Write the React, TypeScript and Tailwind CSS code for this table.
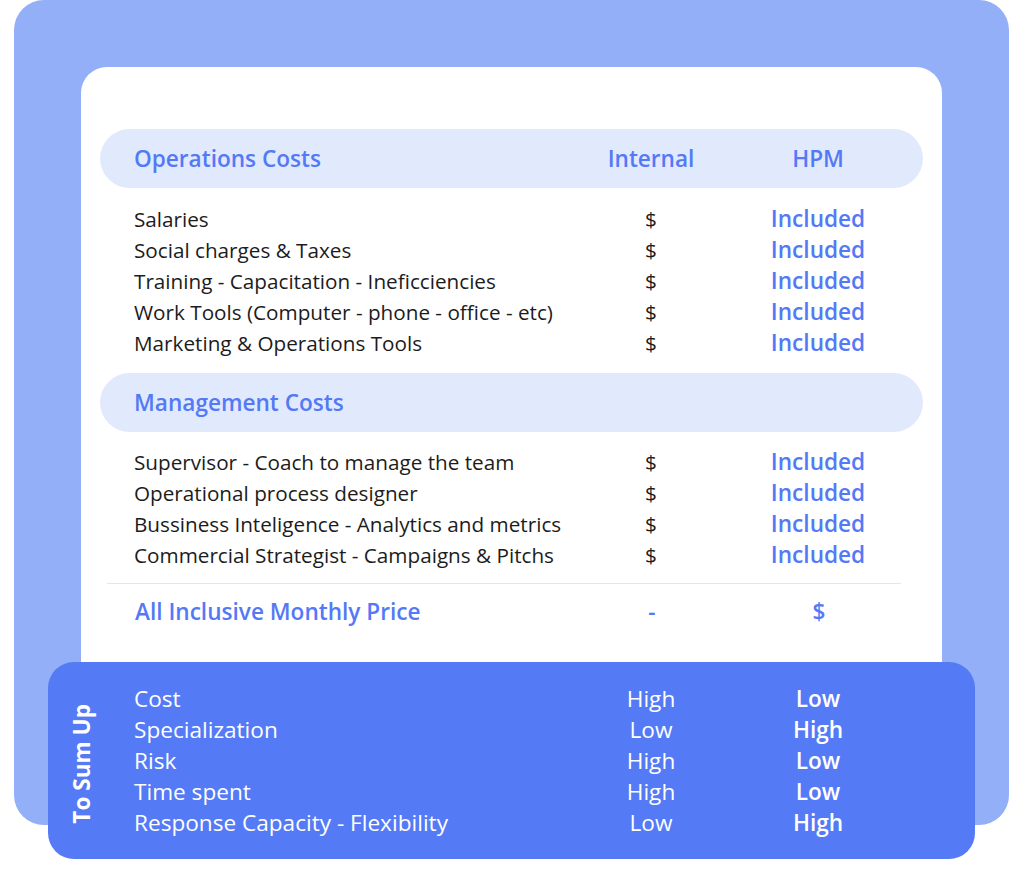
const opsRows = [
  "Salaries",
  "Social charges & Taxes",
  "Training - Capacitation - Ineficciencies",
  "Work Tools (Computer - phone - office - etc)",
  "Marketing & Operations Tools",
];

const mgmtRows = [
  "Supervisor - Coach to manage the team",
  "Operational process designer",
  "Bussiness Inteligence - Analytics and metrics",
  "Commercial Strategist - Campaigns & Pitchs",
];

const sumRows = [
  { label: "Cost", internal: "High", hpm: "Low" },
  { label: "Specialization", internal: "Low", hpm: "High" },
  { label: "Risk", internal: "High", hpm: "Low" },
  { label: "Time spent", internal: "High", hpm: "Low" },
  { label: "Response Capacity - Flexibility", internal: "Low", hpm: "High" },
];

const grid = "grid grid-cols-[415px_130px_130px] gap-x-[37px] items-center whitespace-nowrap";

const Row = ({ label }: { label: string }) => (
  <div className={`${grid} h-[31px] leading-[30px]`}>
    <span className="text-[20.7px] text-[#1c1c1c]">{label}</span>
    <span className="text-center text-[20.7px] text-[#1c1c1c]">$</span>
    <span className="text-center text-[22.6px] font-semibold text-[#5479f6]">Included</span>
  </div>
);

const App = () => {
  return (
    <div
      className="w-[1024px] h-[892px] bg-white overflow-hidden text-[20px]"
      style={{ fontFamily: '"Open Sans", sans-serif' }}
    >
      {/* Outer light panel */}
      <div className="ml-[14px] w-[995px] h-[825px] rounded-[30px] bg-[#92aff8] pt-[67px] px-[67px]">
        {/* White card */}
        <div className="h-full rounded-t-[26px] bg-white pt-[62px] px-[19px]">
          {/* Operations header */}
          <div className="h-[59px] rounded-[30px] bg-[#e1e9fd] px-[34px] flex items-center">
            <div className={`${grid} w-full text-[#5479f6] font-semibold text-[22.6px] leading-[30px]`}>
              <span>Operations Costs</span>
              <span className="text-center">Internal</span>
              <span className="text-center">HPM</span>
            </div>
          </div>

          <div className="px-[34px] py-[15px]">
            {opsRows.map((r) => (
              <Row key={r} label={r} />
            ))}
          </div>

          {/* Management header */}
          <div className="h-[59px] rounded-[30px] bg-[#e1e9fd] px-[34px] flex items-center">
            <span className="text-[#5479f6] font-semibold text-[22.6px] leading-[30px]">Management Costs</span>
          </div>

          <div className="px-[34px] pt-[14px] pb-[13px]">
            {mgmtRows.map((r) => (
              <Row key={r} label={r} />
            ))}
          </div>

          <div className="ml-[7px] mr-[22px] h-px bg-[#dfe6f7]" />

          <div className="px-[35px] pt-[12px]">
            <div className={`${grid} h-[32px] leading-[30px] text-[#5479f6] font-semibold text-[22.6px]`}>
              <span>All Inclusive Monthly Price</span>
              <span className="text-center">-</span>
              <span className="text-center">$</span>
            </div>
          </div>
        </div>
      </div>

      {/* To Sum Up panel */}
      <div className="relative mt-[-163px] ml-[48px] w-[927px] h-[197px] rounded-[26px] bg-[#557af6] flex items-center text-white text-[22.6px]">
        <div className="w-[68px] flex items-center justify-center pt-[6px]">
          <span className="[writing-mode:vertical-rl] rotate-180 font-bold">To Sum Up</span>
        </div>
        <div className="ml-[18px]">
          {sumRows.map((r) => (
            <div key={r.label} className={`${grid} h-[31px] leading-[30px]`}>
              <span>{r.label}</span>
              <span className="text-center">{r.internal}</span>
              <span className="text-center font-semibold">{r.hpm}</span>
            </div>
          ))}
        </div>
      </div>
    </div>
  );
};

export default App;
